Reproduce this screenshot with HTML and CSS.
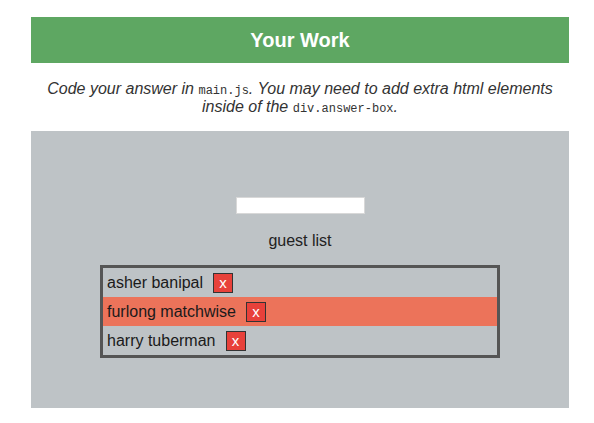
FILE: index.html
```html
<!DOCTYPE html>
<html>
<head>
<meta charset="utf-8">
<link rel="stylesheet" href="styles.css">
</head>
<body>
<div class="page">
  <h1 class="title">Your Work</h1>
  <p class="instructions">Code your answer in <code>main.js</code>. You may need to add extra html elements inside of the <code>div.answer-box</code>.</p>
  <div class="answer-box">
    <input class="guest-input" type="text">
    <div class="list-title">guest list</div>
    <ul class="guests">
      <li class="guest"><span>asher banipal</span><button class="remove">x</button></li>
      <li class="guest active"><span>furlong matchwise</span><button class="remove">x</button></li>
      <li class="guest"><span>harry tuberman</span><button class="remove">x</button></li>
    </ul>
  </div>
</div>
</body>
</html>
```

FILE: styles.css
```css
html, body {
  margin: 0;
  padding: 0;
  background: #fff;
}
body {
  font-family: "Liberation Sans", Arial, sans-serif;
  color: #222;
}
.page {
  width: 538px;
  margin-left: 31px;
  padding-top: 17px;
}
.title {
  margin: 0;
  height: 46px;
  background: #5ea762;
  color: #fff;
  font-size: 20px;
  font-weight: bold;
  display: flex;
  align-items: center;
  justify-content: center;
}
.instructions {
  margin: 17px 0 0;
  padding: 0 12px;
  font-size: 16px;
  font-style: italic;
  line-height: 18px;
  text-align: center;
  color: #333;
}
.instructions code {
  font-family: "Liberation Mono", monospace;
  font-size: 12px;
  font-style: normal;
  line-height: 1;
}
.answer-box {
  margin-top: 15px;
  height: 277px;
  background: #bec3c6;
  display: flex;
  flex-direction: column;
  align-items: center;
  padding-top: 66px;
  box-sizing: border-box;
}
.guest-input {
  width: 129px;
  height: 17px;
  box-sizing: border-box;
  border: 1px solid #d8d8d8;
  background: #fff;
  margin: 0;
  padding: 0;
}
.list-title {
  margin-top: 18px;
  font-size: 16px;
  line-height: 18px;
  color: #222;
}
.guests {
  list-style: none;
  margin: 15px 0 0;
  padding: 0;
  width: 400px;
  box-sizing: border-box;
  border: 3px solid #555;
}
.guest {
  height: 29px;
  display: flex;
  align-items: center;
  padding-left: 4px;
  font-size: 16px;
  color: #1a1a1a;
}
.guest.active {
  background: #ec735a;
}
.remove {
  margin: 0 0 0 10px;
  width: 20px;
  height: 20px;
  padding: 0;
  border: 1px solid #333;
  background: #e8413a;
  color: #fff;
  font-family: "Liberation Sans", Arial, sans-serif;
  font-size: 15px;
  line-height: 16px;
  box-sizing: border-box;
}
```
